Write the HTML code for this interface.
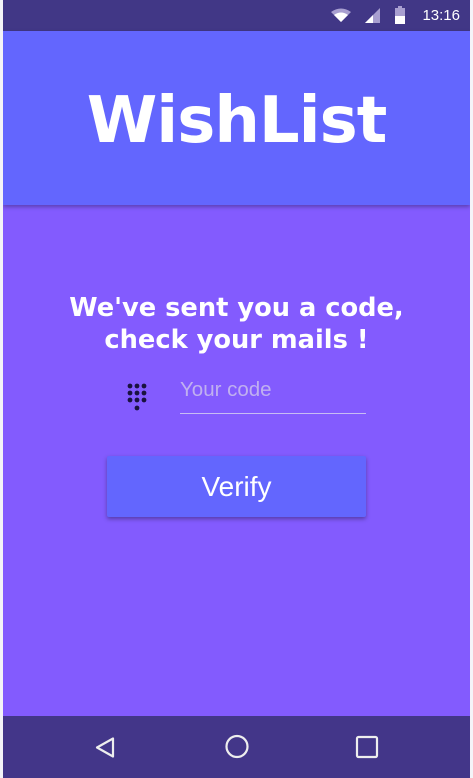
<!DOCTYPE html>
<html><head><meta charset="utf-8"><style>
html,body{margin:0;padding:0;width:473px;height:778px;background:#f4f4f8;overflow:hidden}
.ph{position:absolute;left:3px;top:0;width:467px;height:778px;overflow:hidden}
.sb{position:absolute;left:0;top:0;width:100%;height:31px;background:#413786}
.hd{position:absolute;left:0;top:31px;width:100%;height:174px;background:#6366fe;box-shadow:0 2px 4px rgba(0,0,0,.3);z-index:2}
.mn{position:absolute;left:0;top:205px;width:100%;height:511px;background:#835bfe}
.nv{position:absolute;left:0;top:716px;width:100%;height:62px;background:#433689}
.title{position:absolute;left:0;width:100%;top:84px;text-align:center;color:#fff;font:bold 64px "DejaVu Sans",sans-serif;letter-spacing:-1px}
.sub{position:absolute;left:0;width:100%;top:292px;text-align:center;color:#fff;font:bold 25.7px/32px "DejaVu Sans",sans-serif}
.inp{position:absolute;left:177px;top:378px;color:#c0b0f0;font:20.5px "Liberation Sans",sans-serif}
.line{position:absolute;left:177px;top:413px;width:186px;height:1px;background:#c8bdf3}
.btn{position:absolute;left:104px;top:456px;width:259px;height:61px;background:#6366fe;border-radius:2px;box-shadow:0 2px 4px rgba(0,0,0,.35);color:#fff;text-align:center;font:28px/61px "Liberation Sans",sans-serif}
.clk{position:absolute;right:10px;top:7px;color:#fff;font:15px "Liberation Sans",sans-serif}
</style></head><body><div class="ph">
<div class="sb">
<svg style="position:absolute;left:327px;top:8px" width="22" height="15" viewBox="0 0 20 15"><path d="M0 4Q10-3 20 4L10 14Z" fill="#a89fd0"/><path d="M3 7Q10 2 17 7L10 14Z" fill="#fff"/></svg>
<svg style="position:absolute;left:362px;top:7px" width="16" height="16"><path d="M0 16L15 1V16Z" fill="#a89fd0"/><path d="M0 16L8 8V16Z" fill="#fff"/></svg>
<svg style="position:absolute;left:392px;top:6px" width="10" height="18"><rect x="3" y="0" width="4" height="2" fill="#a89fd0"/><rect x="0" y="2" width="10" height="16" fill="#a89fd0"/><rect x="0" y="10" width="10" height="8" fill="#fff"/></svg>
<div class="clk">13:16</div>
</div>
<div class="hd"></div>
<div class="title" style="z-index:3">WishList</div>
<div class="mn"></div>
<div class="sub">We've sent you a code,<br>check your mails !</div>
<svg style="position:absolute;left:124px;top:383px" width="26" height="30"><g fill="#1a1240"><circle cx="3" cy="3" r="2.4"/><circle cx="10" cy="3" r="2.4"/><circle cx="17" cy="3" r="2.4"/><circle cx="3" cy="10" r="2.4"/><circle cx="10" cy="10" r="2.4"/><circle cx="17" cy="10" r="2.4"/><circle cx="3" cy="17" r="2.4"/><circle cx="10" cy="17" r="2.4"/><circle cx="17" cy="17" r="2.4"/><circle cx="10" cy="25" r="2.4"/></g></svg>
<div class="inp">Your code</div>
<div class="line"></div>
<div class="btn">Verify</div>
<div class="nv">
<svg style="position:absolute;left:90px;top:19px" width="26" height="26"><path d="M4 12.5L20 3.5V21.5Z" fill="none" stroke="#eee" stroke-width="2.2" stroke-linejoin="round"/></svg>
<svg style="position:absolute;left:221px;top:18px" width="26" height="26"><circle cx="13" cy="12.5" r="10.5" fill="none" stroke="#eee" stroke-width="2.2"/></svg>
<svg style="position:absolute;left:352px;top:19px" width="24" height="24"><rect x="2" y="2" width="20" height="20" rx="1.5" fill="none" stroke="#eee" stroke-width="2.2"/></svg>
</div>
</div></body></html>
